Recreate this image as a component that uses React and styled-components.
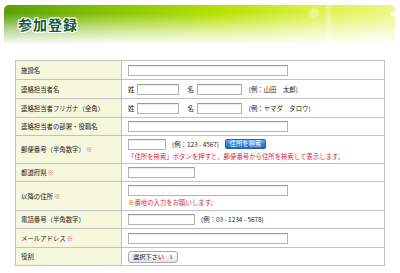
import styled, { createGlobalStyle } from "styled-components";

const GlobalStyle = createGlobalStyle`
  body {
    margin: 0;
    background: #fff;
    font-family: "Noto Sans CJK JP", "Noto Sans", sans-serif;
  }
`;

const Page = styled.div`
  width: 400px;
  height: 273px;
  overflow: hidden;
`;

const Banner = styled.div`
  margin: 5px 5px 0 4px;
  height: 40px;
  border-radius: 5px 5px 0 0;
  background:
    radial-gradient(circle at 389px 9px, rgba(255, 255, 255, 0.9) 0 2px, transparent 3px),
    radial-gradient(circle at 310px 8px, rgba(255, 255, 255, 0.35) 0 4px, transparent 6px),
    linear-gradient(to right, transparent 320px, rgba(255, 255, 255, 0.35) 324px, transparent 330px),
    linear-gradient(to bottom, rgba(255, 255, 255, 0) 20%, rgba(255, 255, 255, 0.55) 60%, #fff 100%),
    linear-gradient(to right, #5c9e0a 0%, #8cc800 30%, #b8e000 55%, #dcf24a 80%, #ecf888 100%);
  display: flex;
  align-items: flex-start;
  padding: 11px 0 0 14px;
  box-sizing: border-box;
`;

const Title = styled.h1`
  margin: 0;
  font-size: 14px;
  line-height: 16px;
  font-weight: bold;
  letter-spacing: 1px;
  color: #175c36;
  text-shadow:
    1px 0 0 #fff, -1px 0 0 #fff, 0 1px 0 #fff, 0 -1px 0 #fff,
    1px 1px 0 #fff, -1px -1px 0 #fff, 1px -1px 0 #fff, -1px 1px 0 #fff;
`;

const Table = styled.table`
  margin: 15px 0 0 15px;
  width: 370px;
  table-layout: fixed;
  border-collapse: collapse;
  font-size: 6.4px;
  color: #222;
`;

const Label = styled.th`
  width: 106px;
  height: ${({ $h }) => $h}px;
  padding: 0 0 0 5px;
  box-sizing: border-box;
  text-align: left;
  font-weight: normal;
  white-space: nowrap;
  background: #f5f8dc;
  border: 1px solid #c2c2c2;
  vertical-align: middle;
`;

const Cell = styled.td`
  padding: 0 0 0 6px;
  border: 1px solid #c2c2c2;
  vertical-align: middle;
`;

const Line = styled.div`
  display: flex;
  align-items: center;
  gap: ${({ $gap }) => $gap ?? 4}px;
`;

const Mark = styled.span`
  color: #e8607a;
  margin-left: 1px;
`;

const Input = styled.input`
  display: block;
  width: ${({ $w }) => $w}px;
  height: 11px;
  box-sizing: border-box;
  margin: 0;
  padding: 0;
  border: 1px solid #b4b4b4;
  border-top-color: #9a9a9a;
  box-shadow: inset 0 1px 1px rgba(0, 0, 0, 0.08);
  background: #fff;
`;

const Hint = styled.span`
  margin-left: ${({ $ml }) => $ml ?? 0}px;
  white-space: nowrap;
`;

const Note = styled.div`
  color: #e0283a;
  margin-top: 2px;
  white-space: nowrap;
`;

const SearchButton = styled.button`
  height: 10px;
  width: 41px;
  padding: 0;
  margin-left: 2px;
  border: 1px solid #1d63b8;
  border-radius: 2px;
  background: linear-gradient(#6cb4f0, #2b7ed6 55%, #1c6ac4);
  color: #fff;
  font: inherit;
  font-size: 6.4px;
  line-height: 8px;
`;

const Select = styled.div`
  display: inline-flex;
  align-items: center;
  gap: 5px;
  height: 10px;
  padding: 0 4px;
  border: 1px solid #a8a8a8;
  border-radius: 3px;
  background: linear-gradient(#fdfdfd, #e4e4e4);
  font-size: 6.2px;
  color: #222;
`;

const Arrows = styled.span`
  font-size: 5px;
  color: #555;
`;

export default function App() {
  return (
    <Page>
      <GlobalStyle />
      <Banner>
        <Title>参加登録</Title>
      </Banner>
      <Table>
        <tbody>
          <tr>
            <Label $h={19}>施設名</Label>
            <Cell>
              <Input $w={160} />
            </Cell>
          </tr>
          <tr>
            <Label $h={19}>連絡担当者名</Label>
            <Cell>
              <Line $gap={3}>
                <span>姓</span>
                <Input $w={42} />
                <Hint $ml={5}>名</Hint>
                <Input $w={45} />
                <Hint $ml={4}>(例：山田　太郎)</Hint>
              </Line>
            </Cell>
          </tr>
          <tr>
            <Label $h={19}>連絡担当者フリガナ（全角）</Label>
            <Cell>
              <Line $gap={3}>
                <span>姓</span>
                <Input $w={42} />
                <Hint $ml={5}>名</Hint>
                <Input $w={45} />
                <Hint $ml={4}>(例：ヤマダ　タロウ)</Hint>
              </Line>
            </Cell>
          </tr>
          <tr>
            <Label $h={18}>連絡担当者の部署・役職名</Label>
            <Cell>
              <Input $w={160} />
            </Cell>
          </tr>
          <tr>
            <Label $h={28}>
              郵便番号（半角数字）<Mark>※</Mark>
            </Label>
            <Cell>
              <Line $gap={4}>
                <Input $w={38} />
                <Hint $ml={2}>(例：123 - 4567)</Hint>
                <SearchButton>住所を検索</SearchButton>
              </Line>
              <Note>「住所を検索」ボタンを押すと、郵便番号から住所を検索して表示します。</Note>
            </Cell>
          </tr>
          <tr>
            <Label $h={18}>
              都道府県<Mark>※</Mark>
            </Label>
            <Cell>
              <Input $w={67} />
            </Cell>
          </tr>
          <tr>
            <Label $h={29}>
              以降の住所<Mark>※</Mark>
            </Label>
            <Cell>
              <Input $w={160} />
              <Note>※番地の入力をお願いします。</Note>
            </Cell>
          </tr>
          <tr>
            <Label $h={18}>電話番号（半角数字）</Label>
            <Cell>
              <Line $gap={4}>
                <Input $w={67} />
                <Hint $ml={2}>(例：03 - 1234 - 5678)</Hint>
              </Line>
            </Cell>
          </tr>
          <tr>
            <Label $h={19}>
              メールアドレス<Mark>※</Mark>
            </Label>
            <Cell>
              <Input $w={160} />
            </Cell>
          </tr>
          <tr>
            <Label $h={18}>役割</Label>
            <Cell>
              <Select>
                <span>選択下さい</span>
                <Arrows>⇕</Arrows>
              </Select>
            </Cell>
          </tr>
        </tbody>
      </Table>
    </Page>
  );
}
